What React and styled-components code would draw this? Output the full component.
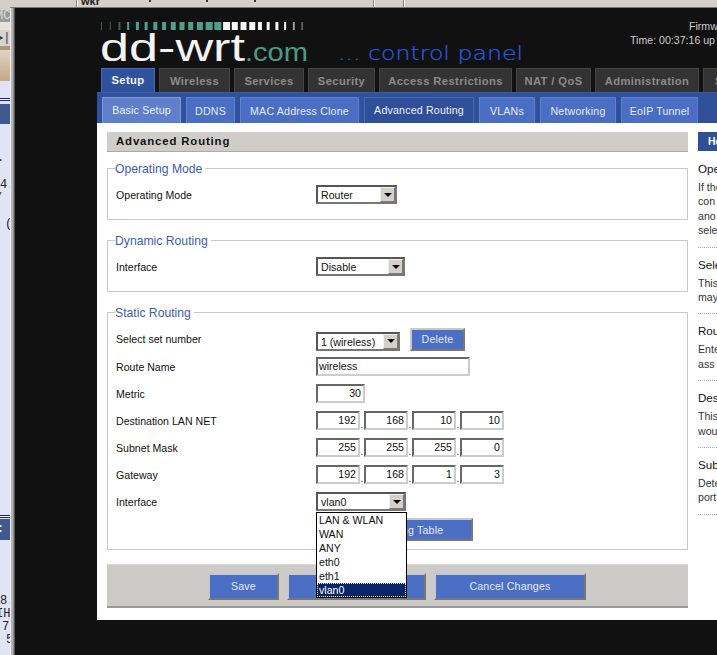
import React from 'react';
import styled, { createGlobalStyle } from 'styled-components';

const SANS = '"Liberation Sans", Arial, sans-serif';

const GlobalStyle = createGlobalStyle`
  html, body {
    margin: 0;
    height: 655px;
    overflow: hidden;
    background: #111;
    font-family: ${SANS};
  }
`;

const Page = styled.div`
  display: flex;
  width: 717px;
  height: 655px;
  overflow: hidden;
  background: #111;
`;

/* the other windows peeking out behind the router page */
const LeftStrip = styled.div`
  flex: 0 0 10px;
  width: 10px;
  display: flex;
  flex-direction: column;
  background: #e0e4f4;
  overflow: hidden;
`;

const StripBlock = styled.div`
  height: ${({ $h }) => $h}px;
  flex-shrink: 0;
  background: ${({ $bg }) => $bg || 'transparent'};
  color: ${({ $color }) => $color || '#222'};
  font-family: "Liberation Mono", monospace;
  font-size: 12px;
  line-height: ${({ $h }) => $h}px;
  text-indent: ${({ $indent }) => $indent || 0}px;
  white-space: nowrap;
`;

const Rail = styled.div`
  flex: 0 0 5px;
  background:
    linear-gradient(#d4d0c8 7px, #777 7px, #777 8px, transparent 8px),
    linear-gradient(90deg, #f0f0f0 0 1px, #b4b4b4 1px 3px, #8c8c8c 3px 4px, #555 4px);
`;

const Stage = styled.div`
  flex: 1;
  min-width: 0;
  display: flex;
  flex-direction: column;
`;

const TopStrip = styled.div`
  flex: 0 0 7px;
  display: flex;
  background: #d4d0c8;
  border-bottom: 1px solid #777;
  overflow: hidden;
`;

const StripCell = styled.div`
  flex: 0 0 ${({ $w }) => $w}px;
  box-sizing: border-box;
  display: flex;
  align-items: flex-start;
  border-left: ${({ $first }) => ($first ? '0' : '1px solid #888')};
  box-shadow: ${({ $first }) => ($first ? 'none' : 'inset 1px 0 0 #fff')};
  padding-left: 4px;
  font-size: 11px;
  font-weight: bold;
  line-height: 3px;
  color: #222;
`;

const StripMark = styled.span`
  flex: 0 0 2px;
  height: 2px;
  margin-left: ${({ $ml }) => $ml}px;
  background: #333;
`;

const Body = styled.div`
  flex: 1;
  padding-left: 82px;
  min-height: 0;
`;

const Main = styled.div`
  width: 620px;
  display: flex;
  flex-direction: column;
`;

const Header = styled.header`
  height: 60px;
  flex-shrink: 0;
  display: flex;
  align-items: flex-start;
  padding: 12px 0 0 3px;
  box-sizing: border-box;
`;

const LogoSvg = styled.svg`
  flex: 0 0 430px;
  display: block;
`;

const Info = styled.div`
  margin: -1px 0 0 100px;
  flex: 0 0 87px;
  color: #ccc;
  font-size: 10.6px;
  line-height: 14px;
  white-space: nowrap;
  overflow: hidden;
`;

const InfoLine = styled.div`
  padding-left: ${({ $indent }) => $indent || 0}px;
`;

const Tabs = styled.nav`
  height: 24px;
  flex-shrink: 0;
  display: flex;
  gap: 4px;
  padding-left: 4px;
  overflow: hidden;
`;

const Tab = styled.div`
  flex: 0 0 ${({ $w }) => $w}px;
  box-sizing: border-box;
  display: flex;
  align-items: center;
  justify-content: center;
  padding: ${({ $active }) => ($active ? '0 0 1px' : '1px 0 0')};
  background: ${({ $active }) => ($active ? '#30529c' : '#333')};
  border: 1px solid ${({ $active }) => ($active ? '#4568b8' : '#444')};
  border-bottom: 0;
  color: ${({ $active }) => ($active ? '#f2f4fa' : '#8c8c8c')};
  font-size: 11.2px;
  font-weight: bold;
  letter-spacing: 0.4px;
  white-space: nowrap;
`;

const LastTab = styled(Tab)`
  justify-content: flex-start;
  padding-left: 11px;
`;

const SubBar = styled.div`
  height: 31px;
  flex-shrink: 0;
  box-sizing: border-box;
  display: flex;
  gap: 5px;
  padding: 4px 0 0 5px;
  background: linear-gradient(90deg, #30529c, #2f5099);
  border-top: 1px solid #3a5cab;
`;

const SUB_COLORS = {
  current: { bg: '#5f7fcb', border: '#7f9ad8', color: '#f0f3fb', pad: 2 },
  active: { bg: '#2f4f98', border: '#4568b8', color: '#eef1f9', pad: 2 },
  idle: { bg: '#4a6ec4', border: '#5f80d0', color: '#e8ecf8', pad: 0 },
};

const SubTab = styled.div`
  flex: 0 0 ${({ $w }) => $w}px;
  box-sizing: border-box;
  display: flex;
  align-items: center;
  justify-content: center;
  padding-bottom: ${({ $kind }) => SUB_COLORS[$kind].pad}px;
  background: ${({ $kind }) => SUB_COLORS[$kind].bg};
  border: 1px solid ${({ $kind }) => SUB_COLORS[$kind].border};
  border-bottom: 0;
  color: ${({ $kind }) => SUB_COLORS[$kind].color};
  font-size: 10.6px;
  letter-spacing: 0.2px;
  white-space: nowrap;
`;

const Sheet = styled.div`
  height: 497px;
  box-sizing: border-box;
  background: #fff;
  display: flex;
  gap: 10px;
  padding: 9px 0 0 10px;
`;

const Content = styled.main`
  flex: 0 0 581px;
  display: flex;
  flex-direction: column;
`;

const Title = styled.h2`
  margin: 0 0 8px;
  height: 20px;
  box-sizing: border-box;
  padding-left: 9px;
  background: #cfcdc9;
  border-bottom: 1px solid #aaa;
  color: #111;
  font-size: 11.4px;
  font-weight: bold;
  letter-spacing: 0.85px;
  line-height: 19px;
`;

const Group = styled.fieldset`
  margin: 0 0 ${({ $mb }) => $mb ?? 12}px;
  padding: 5px 0 ${({ $pb }) => $pb ?? 11}px 8px;
  border: 1px solid #c8c8c8;
  min-width: 0;
`;

const Legend = styled.legend`
  padding: 2px 3px 0 0;
  margin-left: -1px;
  color: #3e5cb4;
  font-size: 12.2px;
  line-height: 14px;
`;

const Row = styled.div`
  display: flex;
  align-items: center;
  height: ${({ $h }) => $h || 27}px;
`;

const Label = styled.div`
  flex: 0 0 200px;
  color: #111;
  font-size: 10.6px;
`;

const SelectBox = styled.div`
  position: relative;
  width: ${({ $w }) => $w}px;
  height: 19px;
  margin-top: ${({ $mt }) => $mt || 0}px;
  box-sizing: border-box;
  display: flex;
  justify-content: space-between;
  background: #fff;
  border: 2px solid #777;
  border-top-color: #555;
  border-left-color: #555;
  color: #111;
  font-size: 10.6px;
  line-height: 17px;
  padding-left: 3px;
`;

const SelectArrow = styled.div`
  flex: 0 0 15px;
  height: 15px;
  box-sizing: border-box;
  display: flex;
  align-items: center;
  justify-content: center;
  background: #d4d0c8;
  border: 1px solid;
  border-color: #f2f0ec #777 #777 #f2f0ec;

  &::after {
    content: '';
    border: 4px solid transparent;
    border-top: 4px solid #000;
    border-bottom: 0;
  }
`;

const Dropdown = styled.ul`
  position: absolute;
  z-index: 2;
  left: -2px;
  top: 18px;
  width: 91px;
  margin: 0;
  padding: 0;
  box-sizing: border-box;
  list-style: none;
  background: #fff;
  border: 1px solid #000;
`;

const DropItem = styled.li`
  height: 14px;
  box-sizing: border-box;
  padding-left: 2px;
  font-size: 10.6px;
  line-height: 14px;
  color: ${({ $selected }) => ($selected ? '#fff' : '#111')};
  background: ${({ $selected }) => ($selected ? '#0a246a' : 'transparent')};
  outline: ${({ $selected }) => ($selected ? '1px dotted #ffe9a8' : 'none')};
  outline-offset: -1px;
`;

const TextBox = styled.div`
  width: ${({ $w }) => $w}px;
  height: 19px;
  box-sizing: border-box;
  background: #fff;
  border: 2px solid;
  border-color: #666 #ccc #ccc #666;
  color: #111;
  font-size: 10.6px;
  line-height: 15px;
  padding: 0 2px 0 1px;
  text-align: ${({ $right }) => ($right ? 'right' : 'left')};
`;

const IpDot = styled.span`
  flex: 0 0 4px;
  align-self: flex-end;
  margin-bottom: 4px;
  height: 10px;
  color: #606;
  font-size: 10px;
  line-height: 10px;
  text-align: center;
`;

const Button = styled.button`
  width: ${({ $w }) => $w}px;
  height: ${({ $h }) => $h || 23}px;
  margin: ${({ $mt }) => $mt || 0}px 0 0 ${({ $ml }) => $ml || 0}px;
  flex-shrink: 0;
  padding: 0;
  background: #4a6fc5;
  border: 2px solid;
  border-color: #c8c8c8 #777 #777 #c8c8c8;
  color: #e6ebf8;
  font-family: ${SANS};
  font-size: 10.6px;
  letter-spacing: 0.2px;
`;

const ActionBar = styled.div`
  height: 44px;
  box-sizing: border-box;
  display: flex;
  align-items: center;
  gap: 8px;
  padding: 1px 0 0 101px;
  background: #cdcbc7;
  border-bottom: 2px solid #999;
  border-top: 1px solid #d8d6d2;
`;

const Help = styled.aside`
  flex: 1;
  min-width: 0;
  overflow: hidden;
  white-space: nowrap;
`;

const HelpHead = styled.div`
  height: 19px;
  margin-bottom: 11px;
  padding-left: 10px;
  background: #2f4f98;
  color: #fff;
  font-size: 10.5px;
  font-weight: bold;
  line-height: 19px;
`;

const HelpItem = styled.div`
  padding-bottom: 9px;
  margin-bottom: 10px;
  border-bottom: 1px dotted #aaa;
`;

const HelpTitle = styled.div`
  height: 14px;
  margin-bottom: 4px;
  color: #111;
  font-size: 11.6px;
  line-height: 14px;
`;

const HelpLine = styled.div`
  color: #333;
  font-size: 10.6px;
  line-height: 14.4px;
`;

const BARS = [1, 1, 2, 2, 3, 3, 4, 4, 5, 5, 5, 6, 7, 7, 7, 6, 6, 6, 4, 3, 3, 2, 2, 1];

const Logo = () => (
  <LogoSvg width="430" height="48" viewBox="0 0 430 48">
    {BARS.map((w, i) => (
      <rect
        key={i}
        x={1 + i * 8.72}
        y="2"
        width={w}
        height="8"
        fill={i < 14 ? '#4f9f8c' : '#f4f4f4'}
        opacity={i < 3 || i > 21 ? 0.6 : 1}
      />
    ))}
    <text
      x="0"
      y="41"
      fontFamily="Liberation Sans, sans-serif"
      fontSize="38"
      fill="#f4f4f4"
      textLength="145"
      lengthAdjust="spacingAndGlyphs"
    >
      dd-wrt
    </text>
    <text
      x="145"
      y="41"
      fontFamily="Liberation Sans, sans-serif"
      fontSize="25"
      fill="#4a9a88"
      textLength="63"
      lengthAdjust="spacingAndGlyphs"
    >
      .com
    </text>
    <text
      x="238"
      y="40"
      fontFamily="DejaVu Sans, sans-serif"
      fontSize="20"
      fontWeight="200"
      fill="#2a5ce8"
      stroke="#2a5ce8"
      strokeWidth="0.2"
      textLength="185"
      lengthAdjust="spacingAndGlyphs"
    >
      ... control panel
    </text>
  </LogoSvg>
);

const Select = ({ w, mt, value, children }) => (
  <SelectBox $w={w} $mt={mt}>
    {value}
    <SelectArrow />
    {children}
  </SelectBox>
);

const Ip = ({ parts }) => (
  <>
    {parts.map((part, i) => (
      <React.Fragment key={i}>
        {i > 0 && <IpDot>.</IpDot>}
        <TextBox $w={44} $right>{part}</TextBox>
      </React.Fragment>
    ))}
  </>
);

const OPTIONS = ['LAN & WLAN', 'WAN', 'ANY', 'eth0', 'eth1', 'vlan0'];

const TABS = [
  ['Setup', 54],
  ['Wireless', 71],
  ['Services', 70],
  ['Security', 67],
  ['Access Restrictions', 133],
  ['NAT / QoS', 75],
  ['Administration', 104],
];

const SUBTABS = [
  ['Basic Setup', 79, 'current'],
  ['DDNS', 49, 'idle'],
  ['MAC Address Clone', 119, 'idle'],
  ['Advanced Routing', 110, 'active'],
  ['VLANs', 56, 'idle'],
  ['Networking', 76, 'idle'],
  ['EoIP Tunnel', 77, 'idle'],
];

const HELP = [
  ['Ope', ['If the', 'con', 'ano', 'sele']],
  ['Sele', ['This', 'may']],
  ['Rou', ['Ente', 'ass']],
  ['Des', ['This', 'wou']],
  ['Sub', ['Dete', 'port']],
];

export default function App() {
  return (
    <Page>
      <GlobalStyle />
      <LeftStrip>
        <StripBlock $h={10} $bg="#d4d0c8" />
        <StripBlock $h={12} $bg="#9a9a9a" $color="#ddd" $indent={-4}>MC</StripBlock>
        <StripBlock $h={8} $bg="#e6e2da" />
        <StripBlock $h={16} $bg="#d8d4cc" $color="#334" $indent={-4}>{'\u25B6\uFE0E|'}</StripBlock>
        <StripBlock $h={4} $bg="#a89880" />
        <StripBlock $h={31} $bg="linear-gradient(#e0d4c4, #c4a888)" />
        <StripBlock $h={17} />
        <StripBlock $h={1} $bg="#1a1a8a" />
        <StripBlock $h={1} $bg="#fff" />
        <StripBlock $h={1} $bg="#1a1a8a" />
        <StripBlock $h={3} />
        <StripBlock $h={20} $bg="#3f5a90" />
        <StripBlock $h={28} />
        <StripBlock $h={12} $indent={-3}>.</StripBlock>
        <StripBlock $h={15} />
        <StripBlock $h={13}>4.</StripBlock>
        <StripBlock $h={12} $indent={-5}>/</StripBlock>
        <StripBlock $h={14} />
        <StripBlock $h={13} $indent={5}>(</StripBlock>
        <StripBlock $h={284} />
        <StripBlock $h={1} $bg="#1a1a8a" />
        <StripBlock $h={1} $bg="#fff" />
        <StripBlock $h={1} $bg="#1a1a8a" />
        <StripBlock $h={1} />
        <StripBlock $h={21} $bg="#3f5a90" $color="#fff" $indent={-3}>:</StripBlock>
        <StripBlock $h={55} />
        <StripBlock $h={13}>8.</StripBlock>
        <StripBlock $h={13} $indent={-4}>IH</StripBlock>
        <StripBlock $h={13} $indent={2}>7</StripBlock>
        <StripBlock $h={13} $indent={6}>5</StripBlock>
      </LeftStrip>
      <Rail />
      <Stage>
        <TopStrip>
          <StripCell $w={61} $first />
          <StripCell $w={297}>
            wkr
            <StripMark $ml={49} />
            <StripMark $ml={55} />
            <StripMark $ml={46} />
          </StripCell>
          <StripCell $w={30} />
          <StripCell $w={314} />
        </TopStrip>
        <Body>
          <Main>
            <Header>
              <Logo />
              <Info>
                <InfoLine $indent={59}>Firmw</InfoLine>
                <InfoLine>Time: 00:37:16 up</InfoLine>
              </Info>
            </Header>
            <Tabs>
              {TABS.map(([label, w], i) => (
                <Tab key={label} $w={w} $active={i === 0}>{label}</Tab>
              ))}
              <LastTab $w={30}>S</LastTab>
            </Tabs>
            <SubBar>
              {SUBTABS.map(([label, w, kind]) => (
                <SubTab key={label} $w={w} $kind={kind}>{label}</SubTab>
              ))}
            </SubBar>
            <Sheet>
              <Content>
                <Title>Advanced Routing</Title>
                <Group>
                  <Legend>Operating Mode</Legend>
                  <Row>
                    <Label>Operating Mode</Label>
                    <Select w={81} value="Router" />
                  </Row>
                </Group>
                <Group>
                  <Legend>Dynamic Routing</Legend>
                  <Row>
                    <Label>Interface</Label>
                    <Select w={89} value="Disable" />
                  </Row>
                </Group>
                <Group $pb={7} $mb={14}>
                  <Legend>Static Routing</Legend>
                  <Row $h={28}>
                    <Label>Select set number</Label>
                    <Select w={84} mt={4} value="1 (wireless)" />
                    <Button $w={55} $ml={10}>Delete</Button>
                  </Row>
                  <Row>
                    <Label>Route Name</Label>
                    <TextBox $w={154}>wireless</TextBox>
                  </Row>
                  <Row>
                    <Label>Metric</Label>
                    <TextBox $w={49} $right>30</TextBox>
                  </Row>
                  <Row>
                    <Label>Destination LAN NET</Label>
                    <Ip parts={['192', '168', '10', '10']} />
                  </Row>
                  <Row>
                    <Label>Subnet Mask</Label>
                    <Ip parts={['255', '255', '255', '0']} />
                  </Row>
                  <Row>
                    <Label>Gateway</Label>
                    <Ip parts={['192', '168', '1', '3']} />
                  </Row>
                  <Row>
                    <Label>Interface</Label>
                    <Select w={90} value="vlan0">
                      <Dropdown>
                        {OPTIONS.map((option) => (
                          <DropItem key={option} $selected={option === 'vlan0'}>{option}</DropItem>
                        ))}
                      </Dropdown>
                    </Select>
                  </Row>
                  <Row>
                    <Button $w={157} $ml={200} $mt={2}>Show Routing Table</Button>
                  </Row>
                </Group>
                <ActionBar>
                  <Button $w={71} $h={27}>Save</Button>
                  <Button $w={139} $h={27} />
                  <Button $w={152} $h={27}>Cancel Changes</Button>
                </ActionBar>
              </Content>
              <Help>
                <HelpHead>He</HelpHead>
                {HELP.map(([title, lines]) => (
                  <HelpItem key={title}>
                    <HelpTitle>{title}</HelpTitle>
                    {lines.map((line) => <HelpLine key={line}>{line}</HelpLine>)}
                  </HelpItem>
                ))}
              </Help>
            </Sheet>
          </Main>
        </Body>
      </Stage>
    </Page>
  );
}
